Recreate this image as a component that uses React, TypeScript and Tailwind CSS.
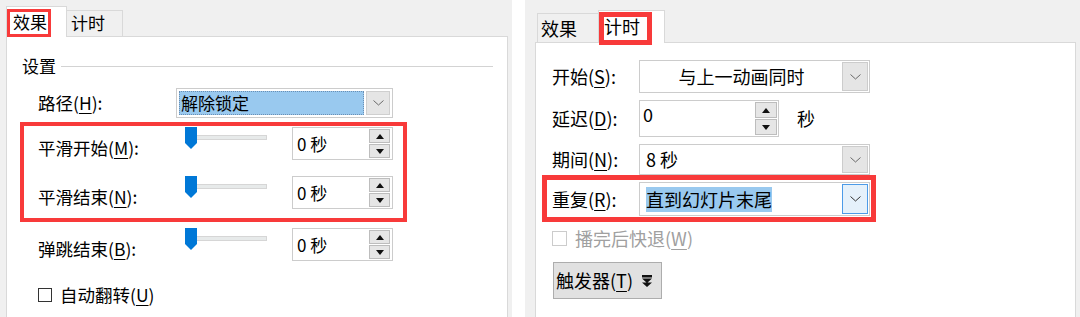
import React from 'react';

const FONT = "font-['Noto_Sans_CJK_SC','Noto_Sans',sans-serif]";

function U({ children }: { children: React.ReactNode }) {
  return <span className="underline decoration-1 underline-offset-[3px]">{children}</span>;
}

function Chevron({ color = '#6a6a6a' }: { color?: string }) {
  return (
    <svg width="11" height="6" viewBox="0 0 11 6" fill="none">
      <path d="M0.5 0.5 L5.5 5 L10.5 0.5" stroke={color} strokeWidth="1" />
    </svg>
  );
}

function Tri({ up }: { up?: boolean }) {
  return (
    <svg width="8" height="5" viewBox="0 0 8 5">
      <path d={up ? 'M0 5 L4 0 L8 5 Z' : 'M0 0 L8 0 L4 5 Z'} fill="#111" />
    </svg>
  );
}

function SpinButtons({ className }: { className: string }) {
  return (
    <div className={`flex flex-col gap-px ${className}`}>
      <div className="flex flex-1 items-center justify-center border border-[#bdbdbd] bg-[#e6e6e6]">
        <Tri up />
      </div>
      <div className="flex flex-1 items-center justify-center border border-[#bdbdbd] bg-[#e6e6e6]">
        <Tri />
      </div>
    </div>
  );
}

function Slider() {
  return (
    <div className="relative h-[22px] w-[107px]">
      <div className="absolute left-[5px] top-[8px] h-[5px] w-[77px] border border-[#d6d6d6] bg-[#e7eaea]" />
      <svg className="absolute left-0 top-0" width="12" height="22" viewBox="0 0 12 22">
        <path d="M0 0 H12 V16 L6 22 L0 16 Z" fill="#0078d7" />
      </svg>
    </div>
  );
}

function LeftSpin() {
  return (
    <div className="flex h-[33px] w-[101px] border border-[#cccccc] bg-white">
      <div className="flex flex-1 items-center pl-[4px] text-[17px]">0 秒</div>
      <SpinButtons className="mr-[2px] w-[21px] py-px" />
    </div>
  );
}

function SliderRow({ label, mn, className = '' }: { label: string; mn: string; className?: string }) {
  return (
    <div className={`flex h-[34px] items-start ${className}`}>
      <div className="mt-[9px] w-[147px] text-[17.5px] leading-[24px]">
        {label}(<U>{mn}</U>):
      </div>
      <Slider />
      <LeftSpin />
    </div>
  );
}

function LeftShot() {
  return (
    <div className="flex h-[317px] w-[512px] flex-col bg-[#f0f0f0]">
      <div className="flex h-[36px] items-end pl-[6px]">
        <div className="relative z-10 -mb-px h-[31px] w-[61px] border border-b-0 border-[#d9d9d9] bg-white pl-[6px] pt-[3px] text-[17px] leading-[24px]">
          效果
          <div className="absolute left-0 top-[2px] h-[28px] w-[44px] border-[3px] border-[#f83a3a]" />
        </div>
        <div className="h-[26px] w-[56px] border-r border-t border-[#d9d9d9] pl-[4px] text-[17px] leading-[24px]">
          计时
        </div>
      </div>
      <div className="ml-[6px] flex w-[502px] flex-1 flex-col border border-b-0 border-[#d9d9d9] bg-white">
        <div className="mt-[19px] flex h-[20px] items-center pl-[15px]">
          <span className="text-[17px] leading-[20px]">设置</span>
          <div className="ml-[5px] mr-[14px] h-px flex-1 bg-[#d3d3d3]" />
        </div>
        <div className="mt-[12px] flex h-[30px] items-center pl-[31px]">
          <div className="w-[138px] text-[17.5px]">
            路径(<U>H</U>):
          </div>
          <div className="flex h-[30px] w-[217px] gap-[2px] border border-[#cccccc] bg-white p-[2px]">
            <div className="flex flex-1 items-center border border-dotted border-[#6b8fb3] bg-[#99c9ef] pl-px text-[17px]">
              解除锁定
            </div>
            <div className="flex w-[24px] items-center justify-center border border-[#cfcfcf] bg-[#e5e5e5]">
              <Chevron />
            </div>
          </div>
        </div>
        <div className="ml-[13px] mt-[4px] w-[387px] border-4 border-[#f83a3a] pb-[8px] pl-[14px] pt-px">
          <SliderRow label="平滑开始" mn="M" />
          <SliderRow label="平滑结束" mn="N" className="mt-[15px]" />
        </div>
        <div className="pl-[31px]">
          <SliderRow label="弹跳结束" mn="B" className="mt-[6px]" />
          <div className="mt-[23px] flex h-[20px] items-center">
            <div className="h-[14px] w-[14px] border border-[#333333] bg-white" />
            <span className="ml-[8px] text-[17.5px]">
              自动翻转(<U>U</U>)
            </span>
          </div>
        </div>
      </div>
    </div>
  );
}

function RightCombo({ children, center, active }: { children: React.ReactNode; center?: boolean; active?: boolean }) {
  return (
    <div className="flex h-full w-[231px] border border-[#cccccc] bg-white p-px">
      <div className={`flex flex-1 items-center text-[18px] ${center ? 'justify-center' : 'pl-[5px]'}`}>{children}</div>
      <div
        className={`flex w-[26px] items-center justify-center border ${
          active ? 'border-[#4c9be8] bg-[#e5f1fb]' : 'border-[#cccccc] bg-[#e5e5e5]'
        }`}
      >
        <Chevron color={active ? '#333333' : '#6a6a6a'} />
      </div>
    </div>
  );
}

function RightLabel({ label, mn }: { label: string; mn: string }) {
  return (
    <div className="w-[87px] text-[18px]">
      {label}(<U>{mn}</U>):
    </div>
  );
}

function RightShot() {
  return (
    <div className="flex h-[317px] flex-1 flex-col bg-[#f0f0f0]">
      <div className="flex h-[42px] items-end pl-[12px]">
        <div className="h-[29px] w-[61px] border-l border-t border-[#d9d9d9] pl-[3px] pt-[2px] text-[18px] leading-[24px]">
          效果
        </div>
        <div className="relative z-10 -mb-px h-[33px] w-[67px] border border-b-0 border-[#d9d9d9] bg-white pl-[5px] pt-[3px] text-[18px] leading-[24px]">
          计时
          <div className="absolute left-0 top-px h-[33px] w-[53px] border-[5px] border-[#f83a3a]" />
        </div>
      </div>
      <div className="ml-[10px] mr-[4px] flex flex-1 flex-col border border-b-0 border-[#d9d9d9] bg-white">
        <div className="mt-[17px] flex h-[33px] items-center pl-[16px]">
          <RightLabel label="开始" mn="S" />
          <RightCombo center>与上一动画同时</RightCombo>
        </div>
        <div className="mt-[7px] flex h-[37px] items-center pl-[16px]">
          <RightLabel label="延迟" mn="D" />
          <div className="flex h-full w-[140px] border border-[#cccccc] bg-white">
            <div className="flex-1 pl-[3px] pt-px text-[18px] leading-[24px]">0</div>
            <SpinButtons className="mr-px w-[22px] py-px" />
          </div>
          <span className="ml-[18px] text-[18px]">秒</span>
        </div>
        <div className="mt-[7px] flex h-[31px] items-center pl-[16px]">
          <RightLabel label="期间" mn="N" />
          <RightCombo>8 秒</RightCombo>
        </div>
        <div className="ml-[6px] w-[334px] border-[5px] border-[#f83a3a] pb-px pl-[5px] pt-[2px]">
          <div className="flex h-[34px] items-center">
            <RightLabel label="重复" mn="R" />
            <div className="h-full">
              <RightCombo active>
                <span className="bg-[#99c9ef] leading-[25px]">直到幻灯片末尾</span>
              </RightCombo>
            </div>
          </div>
        </div>
        <div className="mt-[8px] flex h-[17px] items-center pl-[16px]">
          <div className="h-[15px] w-[15px] border border-[#cccccc] bg-white" />
          <span className="ml-[8px] text-[18px] text-[#a0a0a0]">
            播完后快退(<U>W</U>)
          </span>
        </div>
        <div className="ml-[17px] mt-[15px] flex h-[37px] w-[109px] items-center border border-[#adadad] bg-[#e1e1e1] pl-[2px]">
          <span className="text-[18px]">
            触发器(<U>T</U>)
          </span>
          <svg className="ml-[9px]" width="10" height="12" viewBox="0 0 10 12">
            <path d="M0 0 H10 V2.5 H0 Z M0 3.5 H10 L5 8 Z M0 7.5 H10 L5 12 Z" fill="#111" />
          </svg>
        </div>
      </div>
    </div>
  );
}

export default function App() {
  return (
    <div className={`flex h-[317px] w-[1080px] overflow-hidden bg-white text-black ${FONT}`}>
      <LeftShot />
      <div className="w-[13px] bg-white" />
      <RightShot />
    </div>
  );
}
